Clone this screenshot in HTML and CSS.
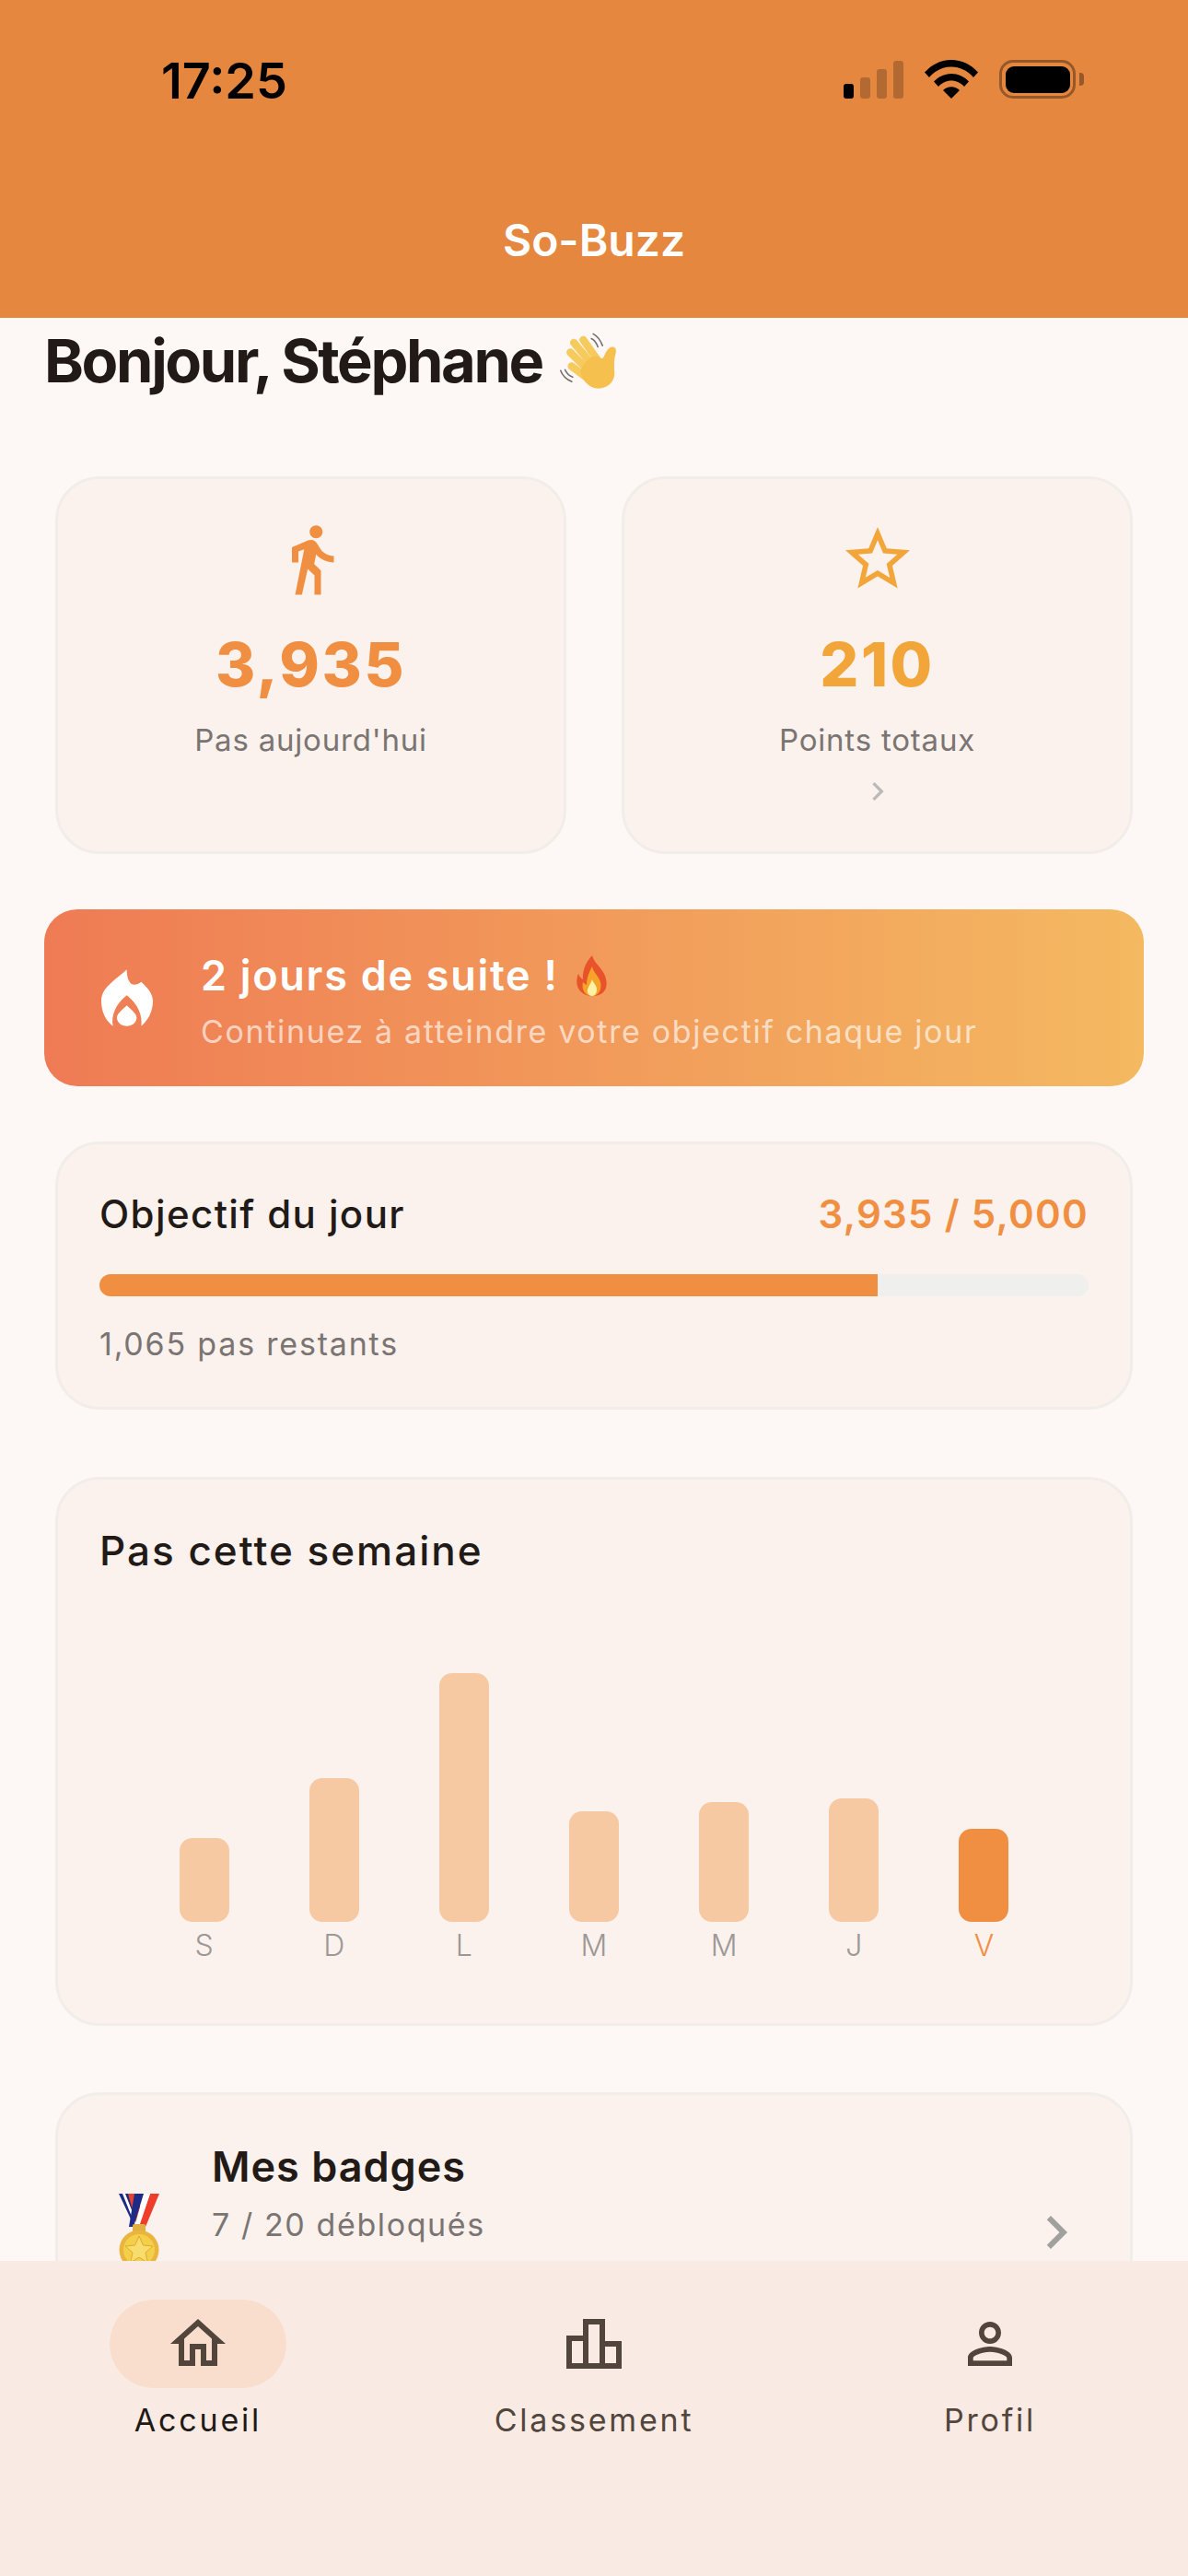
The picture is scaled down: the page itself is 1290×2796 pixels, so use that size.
FILE: index.html

```html
<!DOCTYPE html>
<html lang="fr">
<head>
  <meta charset="UTF-8">
  <meta name="viewport" content="width=device-width, initial-scale=1.0">
  <title>So-Buzz</title>
  <link rel="stylesheet" href="styles.css">
</head>
<body>
  <div class="app">
    <header class="app-header">
      <div class="status-bar">
        <span class="time">17:25</span>
        <div class="status-icons">
          <div class="signal">
            <span class="signal-bar on s1"></span>
            <span class="signal-bar s2"></span>
            <span class="signal-bar s3"></span>
            <span class="signal-bar s4"></span>
          </div>
          <svg class="wifi" viewBox="0 0 58 42">
            <path d="M0 13.500C7.500 5 18 0 29 0s21.500 5 29 13.500l-5 5.500C46.500 11.500 38 7.500 29 7.500S11.500 11.500 5 19z"/>
            <path d="M10 23.500C15 18 21.800 15 29 15s14 3 19 8.500l-5 5.500c-3.700-4-8.700-6.500-14-6.500S18.700 25 15 29z"/>
            <path d="M20 33c2.300-2.500 5.600-3.800 9-3.800s6.700 1.300 9 3.800l-9 9z"/>
          </svg>
          <div class="battery"><span class="battery-level"></span></div>
          <span class="battery-cap"></span>
        </div>
      </div>
      <div class="app-title">So-Buzz</div>
    </header>

    <main class="content">
      <h1 class="greeting">Bonjour, Stéphane
        <svg class="wave" viewBox="70 50 220 210">
          <g fill="none" stroke="#6f6f6f" stroke-width="5" stroke-linecap="round">
            <path d="M196 62c14 7 24 20 32 40"/>
            <path d="M190 78c10 5 17 14 22 28"/>
            <path d="M85 187c5 14 20 30 38 38"/>
            <path d="M100 184c4 10 13 20 26 25"/>
          </g>
          <g fill="none" stroke="#f7ca5e" stroke-width="26" stroke-linecap="round">
            <path d="M130 92l60 72"/>
            <path d="M162 82l48 68"/>
            <path d="M118 125l62 62"/>
            <path d="M122 172l50 38"/>
          </g>
          <path d="M152 190c10-30 40-60 62-50 8 4 14 10 18 0 6-12 14-34 30-34 14 0 14 14 9 30-4 16-4 40-2 60 0 30-24 54-60 52-28-4-50-26-57-58z" fill="#f5c04e"/>
        </svg>
      </h1>

      <section class="stats">
        <div class="card stat-card">
          <svg class="stat-icon steps" viewBox="0 0 24 24"><path d="M13.500 5.500c1.100 0 2-.9 2-2s-.9-2-2-2-2 .9-2 2 .9 2 2 2zM9.800 8.900L7 23h2.100l1.800-8 2.100 2v6h2v-7.500l-2.100-2 .6-3C14.800 12 16.800 13 19 13v-2c-1.900 0-3.500-1-4.300-2.400l-1-1.600c-.4-.6-1-1-1.700-1-.3 0-.5.1-.8.1L6 8.300V13h2V9.600l1.800-.7"/></svg>
          <div class="stat-value steps-value">3,935</div>
          <div class="stat-label">Pas aujourd'hui</div>
        </div>
        <div class="card stat-card">
          <svg class="stat-icon points" viewBox="0 0 24 24"><path d="M22 9.240l-7.190-.62L12 2 9.190 8.630 2 9.240l5.460 4.730L5.820 21 12 17.270 18.180 21l-1.630-7.030L22 9.240zM12 15.400l-3.760 2.270 1-4.280-3.320-2.880 4.380-.38L12 6.100l1.710 4.040 4.380.38-3.320 2.880 1 4.280L12 15.400z"/></svg>
          <div class="stat-value points-value">210</div>
          <div class="stat-label">Points totaux</div>
          <svg class="stat-more" viewBox="0 0 24 24"><path d="M10 6L8.590 7.410 13.170 12l-4.580 4.590L10 18l6-6z"/></svg>
        </div>
      </section>

      <section class="streak">
        <svg class="streak-icon" viewBox="60 88 168 184">
          <path d="M143 88c0 17 3 37 15 47 10 5 22 1 32-7 25 22 38 42 38 62 0 35-16 65-38 82 5-32-10-72-47-100-37 28-52 68-45 100-24-17-38-47-38-82 0-45 50-70 83-102z"/>
          <path d="M143 205c17 17 32 27 32 40 0 15-15 27-32 27s-32-12-32-27c0-13 15-23 32-40z"/>
        </svg>
        <div class="streak-text">
          <div class="streak-title">2 jours de suite !
            <svg class="flame" viewBox="0 0 35 44">
              <path d="M18 0c2 8 9 12 13 20 5 10 4 24-13 24C4 44-2 32 3 20c1 3 3 5 5 6C7 16 12 6 18 0z" fill="#e8532c"/>
              <path d="M18 12c1 6 7 10 9 17 2 8-2 15-9 15S6 38 8 29c1 1 2 2 4 3 0-8 3-14 6-20z" fill="#f6a32a"/>
              <path d="M18 26c1 4 5 6 5 11 0 4-2 7-5 7s-6-3-5-7c1-4 4-7 5-11z" fill="#fff1a6"/>
            </svg>
          </div>
          <div class="streak-sub">Continuez à atteindre votre objectif chaque jour</div>
        </div>
      </section>

      <section class="card goal">
        <div class="goal-head">
          <span class="goal-title">Objectif du jour</span>
          <span class="goal-count">3,935 / 5,000</span>
        </div>
        <div class="progress"><div class="progress-fill" style="width: 78.7%"></div></div>
        <div class="goal-left">1,065 pas restants</div>
      </section>

      <section class="card week">
        <h2 class="week-title">Pas cette semaine</h2>
        <div class="chart">
          <div class="day"><div class="bar" style="height: 91px"></div><span class="day-label">S</span></div>
          <div class="day"><div class="bar" style="height: 156px"></div><span class="day-label">D</span></div>
          <div class="day"><div class="bar" style="height: 270px"></div><span class="day-label">L</span></div>
          <div class="day"><div class="bar" style="height: 120px"></div><span class="day-label">M</span></div>
          <div class="day"><div class="bar" style="height: 130px"></div><span class="day-label">M</span></div>
          <div class="day"><div class="bar" style="height: 134px"></div><span class="day-label">J</span></div>
          <div class="day today"><div class="bar" style="height: 101px"></div><span class="day-label">V</span></div>
        </div>
      </section>

      <section class="card badges">
        <svg class="medal" viewBox="0 0 44 76">
          <path d="M0 0h11l14 36h-8z" fill="#1d2a86"/>
          <path d="M4 0h3l13 33-2 2z" fill="#fff"/>
          <path d="M10 0h10l9 36h-9z" fill="#e8402c"/>
          <path d="M34 0h10L29 36h-8z" fill="#ee3d2b"/>
          <path d="M27 0h7L22 36h-5z" fill="#fff"/>
          <path d="M17 0h10L16 36h-5z" fill="#1d2a86"/>
          <rect x="15" y="33" width="14" height="10" rx="2" fill="#e0b040"/>
          <circle cx="22" cy="61" r="21.500" fill="#e9b53c"/>
          <circle cx="22" cy="61" r="17" fill="#f4cf4a"/>
          <path d="M22 46l4.500 10 10.500 1-8 7 2.500 11-9.500-6-9.500 6 2.500-11-8-7 10.500-1z" fill="#f9dd6c" stroke="#dfa92f" stroke-width="1"/>
        </svg>
        <div class="badges-text">
          <div class="badges-title">Mes badges</div>
          <div class="badges-sub">7 / 20 débloqués</div>
        </div>
        <svg class="badges-more" viewBox="0 0 24 24"><path d="M10 6L8.590 7.410 13.170 12l-4.580 4.590L10 18l6-6z"/></svg>
      </section>
    </main>

    <nav class="bottom-nav">
      <div class="nav-item active">
        <div class="nav-pill">
          <svg class="nav-icon" viewBox="0 0 24 24"><path d="M12 5.690l5 4.500V18h-2v-6H9v6H7v-7.810l5-4.500M12 3L2 12h3v8h6v-6h2v6h6v-8h3L12 3z"/></svg>
        </div>
        <span class="nav-label">Accueil</span>
      </div>
      <div class="nav-item">
        <div class="nav-pill">
          <svg class="nav-icon" viewBox="0 0 24 24"><path d="M16 11V3H8v6H2v12h20V11H16zM10 5h4v14h-4V5zM4 11h4v8H4V11zM20 19h-4v-6h4V19z"/></svg>
        </div>
        <span class="nav-label">Classement</span>
      </div>
      <div class="nav-item">
        <div class="nav-pill">
          <svg class="nav-icon" viewBox="0 0 24 24"><path d="M12 5.900c1.160 0 2.100.94 2.100 2.100s-.94 2.100-2.100 2.100S9.900 9.160 9.900 8s.94-2.100 2.100-2.100m0 9c2.970 0 6.100 1.460 6.100 2.100v1.100H5.900V17c0-.64 3.130-2.100 6.100-2.100M12 4C9.790 4 8 5.790 8 8s1.790 4 4 4 4-1.790 4-4-1.790-4-4-4zm0 9c-2.670 0-8 1.340-8 4v3h16v-3c0-2.660-5.330-4-8-4z"/></svg>
        </div>
        <span class="nav-label">Profil</span>
      </div>
    </nav>
  </div>
</body>
</html>
```

FILE: styles.css

```css
* {
  box-sizing: border-box;
}
body {
  margin: 0;
  font-family: Inter, "Liberation Sans", sans-serif;
  color: #211a16;
  background: #fdf8f5;
}
.app {
  width: 1290px;
  height: 2796px;
  display: flex;
  flex-direction: column;
  overflow: hidden;
}

/* header */
.app-header {
  height: 345px;
  flex: none;
  background: #e68740;
  display: flex;
  flex-direction: column;
}
.status-bar {
  height: 241px;
  padding: 55px 113px 0 175px;
  display: flex;
  justify-content: space-between;
  align-items: flex-start;
}
.time {
  font-size: 54px;
  line-height: 66px;
  font-weight: 600;
  letter-spacing: 0;
  color: #000;
}
.status-icons {
  display: flex;
  align-items: center;
  margin-top: 10px;
}
.signal {
  display: flex;
  align-items: flex-end;
  gap: 7px;
  height: 41px;
  margin-right: 23px;
}
.signal-bar {
  width: 11px;
  border-radius: 3px;
  background: rgba(0, 0, 0, 0.22);
}
.signal-bar.on {
  background: #000;
}
.s1 { height: 16px; }
.s2 { height: 23px; }
.s3 { height: 32px; }
.s4 { height: 41px; }
.wifi {
  width: 58px;
  height: 42px;
  margin-right: 23px;
}
.battery {
  width: 83px;
  height: 42px;
  padding: 3.5px;
  border: 3.500px solid rgba(0, 0, 0, 0.35);
  border-radius: 15px;
}
.battery-level {
  display: block;
  height: 100%;
  background: #000;
  border-radius: 9px;
}
.battery-cap {
  width: 5px;
  height: 14px;
  margin-left: 4px;
  background: rgba(0, 0, 0, 0.35);
  border-radius: 0 4px 4px 0;
}
.app-title {
  text-align: center;
  color: #fff;
  font-size: 48px;
  line-height: 40px;
  font-weight: 600;
}

/* content */
.content {
  flex: 1;
  overflow: hidden;
  padding: 9px 48px 0;
}
.greeting {
  margin: 0;
  font-size: 65px;
  line-height: 76px;
  font-weight: 700;
  letter-spacing: -2.4px;
  display: flex;
  align-items: center;
  gap: 15px;
}
.wave {
  width: 70px;
  height: 68px;
}
.card {
  background: #fbf1ed;
  border: 3px solid #f1eeea;
  border-radius: 48px;
}
.stats {
  display: grid;
  grid-template-columns: 555px 555px;
  gap: 60px;
  margin: 87px 12px 0;
}
.stat-card {
  height: 410px;
  padding-top: 45px;
  display: flex;
  flex-direction: column;
  align-items: center;
}
.stat-icon {
  width: 84px;
  height: 84px;
}
.steps { fill: #f08f42; }
.points { fill: #f2a63a; }
.stat-value {
  margin-top: 32px;
  font-size: 66px;
  line-height: 80px;
  font-weight: 800;
  letter-spacing: 2.5px;
}
.steps-value { color: #f08f42; }
.points-value { color: #f2a63a; }
.stat-label {
  margin-top: 22px;
  font-size: 33px;
  line-height: 40px;
  letter-spacing: 0.8px;
  color: #7a7572;
}
.stat-more {
  width: 40px;
  height: 40px;
  margin-top: 16px;
  fill: #bcbab8;
}

.streak {
  margin-top: 60px;
  height: 192px;
  border-radius: 36px;
  background: linear-gradient(90deg, #ef7b54, #f4b961);
  display: flex;
  align-items: center;
  padding-left: 62px;
}
.streak-icon {
  width: 56px;
  height: 62px;
  fill: #fff;
  flex: none;
}
.streak-title {
  font-size: 45px;
  line-height: 54px;
  font-weight: 600;
  letter-spacing: 1.7px;
  color: #fff;
  display: flex;
  align-items: center;
  gap: 18px;
}
.flame {
  width: 35px;
  height: 44px;
}
.streak-text {
  margin: 6px 0 0 52px;
}
.streak-sub {
  margin-top: 13px;
  font-size: 34px;
  line-height: 42px;
  letter-spacing: 1.65px;
  color: rgba(255, 255, 255, 0.65);
}

.goal {
  margin: 60px 12px 0;
  height: 291px;
  padding: 45px 45px 0;
}
.goal-head {
  display: flex;
  justify-content: space-between;
  align-items: center;
  height: 60px;
}
.goal-title {
  font-size: 42px;
  font-weight: 500;
  letter-spacing: 1.4px;
}
.goal-count {
  font-size: 42px;
  font-weight: 600;
  letter-spacing: 1.3px;
  color: #f08f42;
}
.progress {
  margin-top: 36px;
  height: 24px;
  border-radius: 12px;
  background: #efefee;
  overflow: hidden;
}
.progress-fill {
  height: 100%;
  background: #f08f42;
}
.goal-left {
  margin-top: 31px;
  font-size: 34px;
  line-height: 42px;
  letter-spacing: 1.8px;
  color: #7a7572;
}

.week {
  margin: 73px 12px 0;
  height: 596px;
  padding: 47px 45px 0;
}
.week-title {
  margin: 0;
  font-size: 44px;
  line-height: 60px;
  font-weight: 500;
  letter-spacing: 2px;
}
.chart {
  height: 345px;
  margin: 74px 43px 0;
  display: flex;
  align-items: flex-end;
}
.day {
  flex: 1;
  display: flex;
  flex-direction: column;
  align-items: center;
}
.bar {
  width: 54px;
  border-radius: 14px;
  background: #f6c9a3;
}
.today .bar {
  background: #f08f42;
}
.day-label {
  margin-top: 6px;
  font-size: 32px;
  line-height: 40px;
  font-weight: 300;
  color: #9b9896;
}
.today .day-label {
  color: #f08f42;
}

.badges {
  margin: 72px 12px 0;
  height: 300px;
  position: relative;
  padding: 48px 0 0 66px;
  display: flex;
  align-items: flex-start;
}
.medal {
  width: 44px;
  height: 76px;
  margin-top: 59px;
  flex: none;
}
.badges-text {
  margin-left: 57px;
}
.badges-title {
  font-size: 45px;
  line-height: 60px;
  font-weight: 600;
  letter-spacing: 1px;
}
.badges-sub {
  margin-top: 11px;
  font-size: 34px;
  line-height: 44px;
  letter-spacing: 1.6px;
  color: #7a7572;
}
.badges-more {
  position: absolute;
  right: 44px;
  top: 113px;
  width: 72px;
  height: 72px;
  fill: #a0a09e;
}

/* bottom nav */
.bottom-nav {
  height: 342px;
  flex: none;
  background: #f9ebe3;
  display: flex;
  padding-top: 42px;
}
.nav-item {
  flex: 1;
  display: flex;
  flex-direction: column;
  align-items: center;
  color: #52453c;
}
.nav-pill {
  width: 192px;
  height: 96px;
  border-radius: 48px;
  display: flex;
  align-items: center;
  justify-content: center;
}
.active .nav-pill {
  background: #fadecd;
}
.nav-icon {
  width: 72px;
  height: 72px;
  fill: #52453c;
}
.nav-label {
  margin-top: 14px;
  font-size: 34px;
  line-height: 42px;
  font-weight: 400;
  letter-spacing: 2.8px;
}
.active .nav-label {
  color: #1f1a17;
}
```
